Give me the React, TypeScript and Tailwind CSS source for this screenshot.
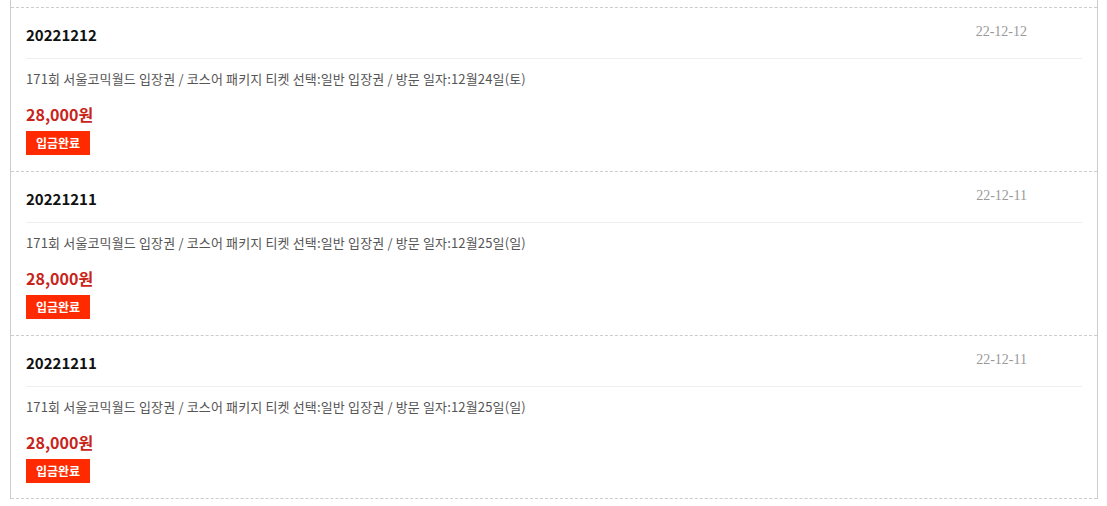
const orders = [
  {
    no: "20221212",
    date: "22-12-12",
    desc: "171회 서울코믹월드 입장권 / 코스어 패키지 티켓 선택:일반 입장권 / 방문 일자:12월24일(토)",
    price: "28,000원",
    status: "입금완료",
  },
  {
    no: "20221211",
    date: "22-12-11",
    desc: "171회 서울코믹월드 입장권 / 코스어 패키지 티켓 선택:일반 입장권 / 방문 일자:12월25일(일)",
    price: "28,000원",
    status: "입금완료",
  },
  {
    no: "20221211",
    date: "22-12-11",
    desc: "171회 서울코믹월드 입장권 / 코스어 패키지 티켓 선택:일반 입장권 / 방문 일자:12월25일(일)",
    price: "28,000원",
    status: "입금완료",
  },
];

function OrderItem({ no, date, desc, price, status }: (typeof orders)[number]) {
  return (
    <div className="h-[164px] border-t border-dashed border-[#ccc] pl-[15px] pr-[15px] last:h-[163px]">
      <div className="flex h-[51px] justify-between border-b border-[#eee]">
        <h3 className="pt-[15px] text-[15px] leading-[24px] font-bold text-[#111]">{no}</h3>
        <span className="mr-[55px] pt-[14px] font-['Liberation_Serif',serif] text-[14px] leading-[20px] text-[#999]">
          {date}
        </span>
      </div>
      <p className="mt-[10px] text-[13px] leading-[20px] tracking-[0.15px] text-[#555]">{desc}</p>
      <p className="mt-[13px] text-[16px] leading-[24px] font-bold text-[#c8241a]">{price}</p>
      <span className="mt-[5px] flex h-[24px] w-[64px] items-center justify-center bg-[#ff2a00] text-[12px] font-bold text-white">
        {status}
      </span>
    </div>
  );
}

export default function App() {
  return (
    <div className="h-[506px] overflow-hidden bg-white font-['Noto_Sans_CJK_KR','Noto_Sans',sans-serif]">
      <div className="ml-[10px] w-[1088px] border-x border-[#ccc] pt-[7px]">
        <div className="border-b border-dashed border-[#ccc]">
          {orders.map((o, i) => (
            <OrderItem key={i} {...o} />
          ))}
        </div>
      </div>
    </div>
  );
}
